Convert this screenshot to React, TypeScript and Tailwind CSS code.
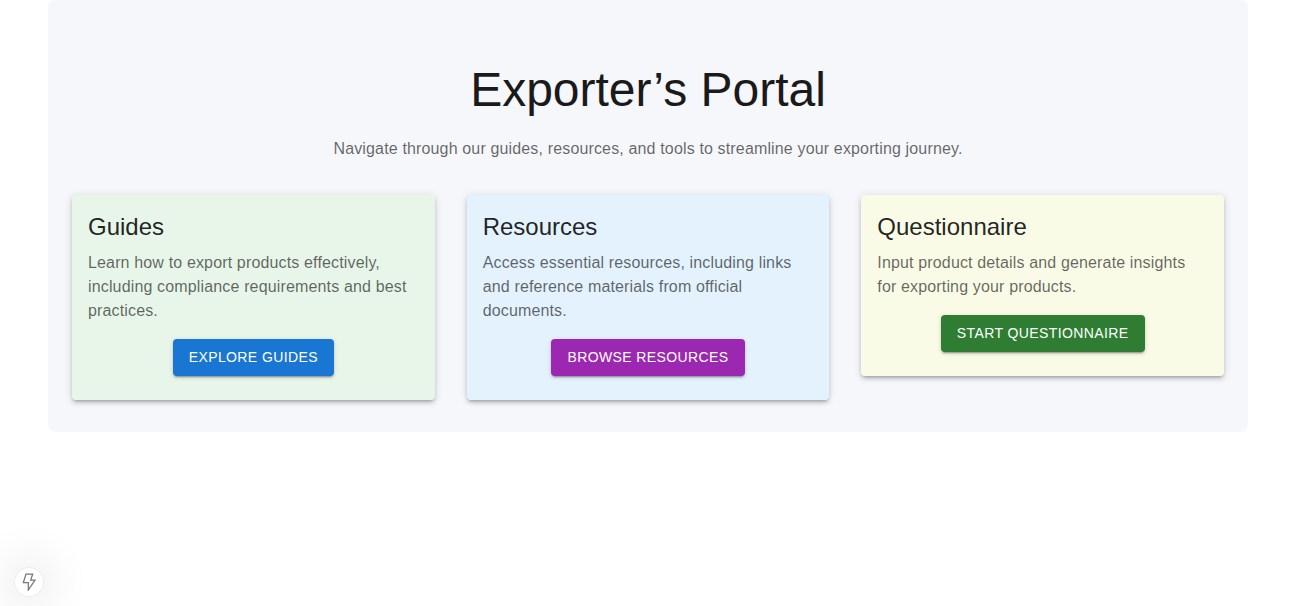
const cards = [
  {
    title: 'Guides',
    text: 'Learn how to export products effectively, including compliance requirements and best practices.',
    action: 'Explore Guides',
    cardClass: 'bg-[#e8f5e9]',
    buttonClass: 'bg-[#1976d2]',
  },
  {
    title: 'Resources',
    text: 'Access essential resources, including links and reference materials from official documents.',
    action: 'Browse Resources',
    cardClass: 'bg-[#e3f2fd]',
    buttonClass: 'bg-[#9c27b0]',
  },
  {
    title: 'Questionnaire',
    text: 'Input product details and generate insights for exporting your products.',
    action: 'Start Questionnaire',
    cardClass: 'bg-[#f9fbe7]',
    buttonClass: 'bg-[#2e7d32]',
  },
];

const elevation2 =
  'shadow-[0_3px_1px_-2px_rgba(0,0,0,0.2),0_2px_2px_0_rgba(0,0,0,0.14),0_1px_5px_0_rgba(0,0,0,0.12)]';
const elevation3 =
  'shadow-[0_3px_3px_-2px_rgba(0,0,0,0.2),0_3px_4px_0_rgba(0,0,0,0.14),0_1px_8px_0_rgba(0,0,0,0.12)]';

const App = () => {
  return (
    <div className="min-h-[606px] bg-white font-['Liberation_Sans',Arial,sans-serif] text-black/87 overflow-hidden">
      <main className="ml-12 w-[1200px] rounded-lg bg-[#f5f7fb] px-6 pt-[62px] pb-8">
        <h1 className="text-center text-[48px] leading-[56px] font-normal text-[#1a1a1a]">Exporter’s Portal</h1>
        <p className="mt-[19px] text-center text-base leading-6 tracking-[0.00938em] text-black/60">
          Navigate through our guides, resources, and tools to streamline your exporting journey.
        </p>
        <div className="mt-[34px] grid grid-cols-3 items-start gap-8">
          {cards.map((card) => (
            <section key={card.title} className={`rounded p-4 pb-6 ${elevation3} ${card.cardClass}`}>
              <h2 className="text-2xl leading-8 font-normal">{card.title}</h2>
              <p className="mt-2 text-base leading-6 tracking-[0.00938em] text-black/60">{card.text}</p>
              <div className="mt-4 flex justify-center">
                <button
                  className={`rounded px-4 py-1.5 text-sm leading-[24.5px] font-medium tracking-[0.02857em] text-white uppercase ${elevation2} ${card.buttonClass}`}
                >
                  {card.action}
                </button>
              </div>
            </section>
          ))}
        </div>
      </main>
      <div className="fixed bottom-[10px] left-[15px] flex h-[28px] w-[28px] items-center justify-center rounded-full bg-white shadow-[0_0_0_1px_rgba(0,0,0,0.05),0_0_40px_16px_rgba(0,0,0,0.06)]">
        <svg width="16" height="18" viewBox="0 0 16 18" fill="none" stroke="#777777" strokeWidth="1.25" strokeLinejoin="miter">
          <path d="M5 1h6.7L9.7 7H14L7.3 17V9.7H2.3L5 1z" />
        </svg>
      </div>
    </div>
  );
};

export default App;
